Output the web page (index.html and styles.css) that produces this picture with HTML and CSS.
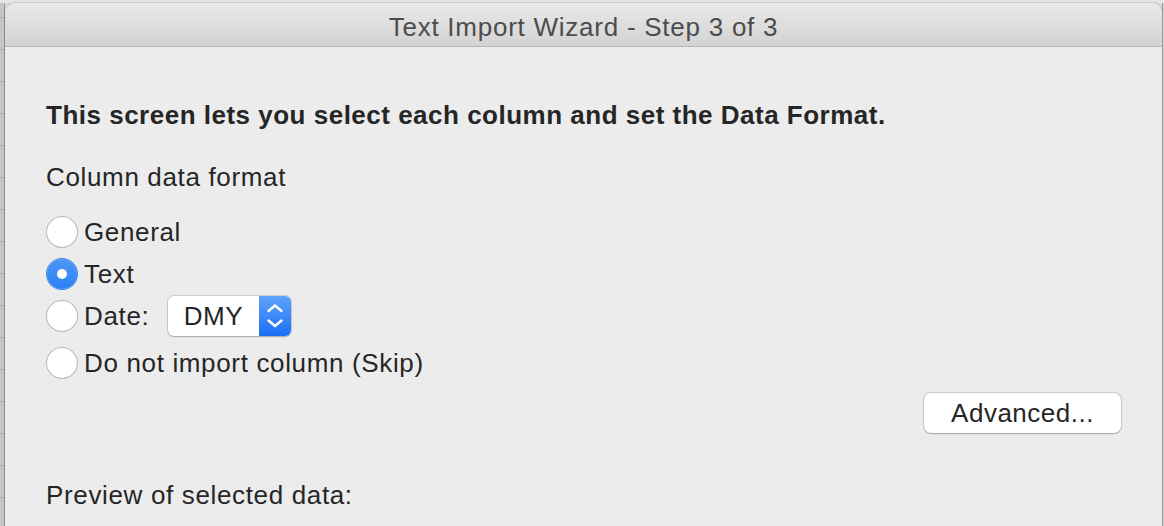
FILE: index.html
```html
<!DOCTYPE html>
<html>
<head>
<meta charset="utf-8">
<link rel="stylesheet" href="styles.css">
</head>
<body>
<div class="desktop">
  <div class="top-strip"></div>
  <div class="left-strip"></div>
  <div class="window">
    <div class="titlebar">Text Import Wizard - Step 3 of 3</div>
    <div class="content">
      <div class="heading">This screen lets you select each column and set the Data Format.</div>
      <div class="label">Column data format</div>
      <div class="radios">
        <div class="row"><span class="radio"></span><span class="rlabel">General</span></div>
        <div class="row"><span class="radio on"></span><span class="rlabel">Text</span></div>
        <div class="row"><span class="radio"></span><span class="rlabel date">Date:</span>
          <span class="select"><span class="select-val">DMY</span><span class="select-btn">
            <svg width="32" height="40" viewBox="0 0 32 40"><path d="M9.5 15 L16 9.5 L22.5 15" fill="none" stroke="#fff" stroke-width="2.4" stroke-linecap="round" stroke-linejoin="round"/><path d="M9.5 24.5 L16 30 L22.5 24.5" fill="none" stroke="#fff" stroke-width="2.4" stroke-linecap="round" stroke-linejoin="round"/></svg>
          </span></span>
        </div>
        <div class="row last"><span class="radio"></span><span class="rlabel">Do not import column (Skip)</span></div>
      </div>
      <div class="btn-row"><button class="btn">Advanced...</button></div>
      <div class="label preview">Preview of selected data:</div>
    </div>
  </div>
  <div class="right-strip"></div>
</div>
</body>
</html>
```
FILE: styles.css
```css
html, body { margin: 0; padding: 0; }
body { width: 1164px; height: 526px; overflow: hidden; font-family: "Liberation Sans", Arial, sans-serif; }
.desktop {
  width: 1164px; height: 526px;
  display: grid;
  grid-template-columns: 5px 1fr 2px;
  grid-template-rows: 3px 1fr;
  background: #d9d9d9;
}
.top-strip { grid-column: 1 / -1; background: #e4e4e4; }
.left-strip {
  background-color: #c6c6c6;
  background-image: repeating-linear-gradient(to bottom, transparent 0 14px, #a9a9a9 14px 15px, transparent 15px 32px);
  border-right: 1px solid #9c9c9c;
}
.right-strip {
  background-color: #d0d0d0;
  border-left: 1px solid #9c9c9c;
}
.window {
  background: #ececec;
  border-radius: 10px 10px 0 0;
  overflow: hidden;
  box-shadow: 0 0 0 1px rgba(0,0,0,0.12);
}
.titlebar {
  height: 43px;
  border-bottom: 1px solid #b6b6b6;
  background: linear-gradient(to bottom, #e9e9e9, #d3d3d3);
  color: #4c4c4c;
  font-size: 26px;
  line-height: 48px;
  text-align: center;
  letter-spacing: 0.75px;
}
.content {
  padding: 53px 40px 0 41px;
  color: #262626;
  font-size: 26px;
  line-height: 30px;
  letter-spacing: 0.65px;
}
.heading { font-weight: bold; letter-spacing: 0.5px; }
.label { margin-top: 32px; }
.radios { margin-top: 19px; }
.row { height: 42px; display: flex; align-items: center; }
.row.last { margin-top: 5px; }
.radio {
  width: 30px; height: 30px; border-radius: 50%;
  background: #fff;
  box-shadow: 0 0 0 1px #b9b9b9, 0 1px 1px rgba(0,0,0,0.08);
  margin-left: 1px;
  margin-right: 7px;
  display: flex; align-items: center; justify-content: center;
  flex: none;
}
.radio.on { background: linear-gradient(to bottom, #4c98f9, #2c7ff6); box-shadow: 0 0 0 1px #3b86f0; }
.radio.on::after { content: ""; width: 10px; height: 10px; border-radius: 50%; background: #fff; }
.rlabel.date { width: 84px; }
.select {
  display: flex; height: 40px; width: 123px; border-radius: 6px; overflow: hidden;
  background: #fff;
  box-shadow: 0 0 0 1px rgba(0,0,0,0.13), 0 1px 1.5px rgba(0,0,0,0.18);
}
.select-val { flex: 1; text-align: center; line-height: 40px; }
.select-btn { width: 32px; background: linear-gradient(to bottom, #5ea3fa, #1b6ff5); display: block; }
.select-btn svg { display: block; }
.btn-row { display: flex; justify-content: flex-end; margin-top: 9px; }
.btn {
  width: 197px; height: 40px; border: none; border-radius: 7px;
  background: #fff;
  box-shadow: 0 0 0 1px rgba(0,0,0,0.13), 0 1px 1.5px rgba(0,0,0,0.2);
  font-family: inherit; font-size: 26px; color: #262626; padding: 0;
  letter-spacing: 0.5px;
  margin-right: 1px;
}
.preview { margin-top: 47px; }
```
